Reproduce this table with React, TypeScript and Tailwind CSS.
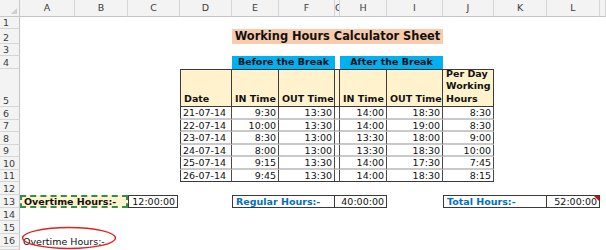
import React from 'react'

const colStart: Record<number, string> = {
  1: 'col-start-1', 2: 'col-start-2', 3: 'col-start-3', 4: 'col-start-4', 5: 'col-start-5',
  6: 'col-start-6', 7: 'col-start-7', 8: 'col-start-8', 9: 'col-start-9', 10: 'col-start-10',
  11: 'col-start-11', 12: 'col-start-12', 13: 'col-start-13', 14: 'col-start-14',
}

const rowStart: Record<number, string> = {
  1: 'row-start-1', 2: 'row-start-2', 3: 'row-start-3', 4: 'row-start-4', 5: 'row-start-5',
  6: 'row-start-6', 7: 'row-start-7', 8: 'row-start-8', 9: 'row-start-9', 10: 'row-start-10',
  11: 'row-start-11', 12: 'row-start-12', 13: 'row-start-13', 14: 'row-start-14', 15: 'row-start-15',
  16: 'row-start-16', 17: 'row-start-17', 18: 'row-start-18',
}

const letters = ['A', 'B', 'C', 'D', 'E', 'F', 'G', 'H', 'I', 'J', 'K', 'L', '']

// date, in, out, in, out, per day
const rows = [
  ['21-07-14', '9:30', '13:30', '14:00', '18:30', '8:30'],
  ['22-07-14', '10:00', '13:30', '14:00', '19:00', '8:30'],
  ['23-07-14', '8:30', '13:00', '13:30', '18:00', '9:00'],
  ['24-07-14', '8:00', '13:00', '13:30', '18:30', '10:00'],
  ['25-07-14', '9:15', '13:30', '14:00', '17:30', '7:45'],
  ['26-07-14', '9:45', '13:30', '14:00', '18:30', '8:15'],
]

const heads = ['Date', 'IN Time', 'OUT Time', '', 'IN Time', 'OUT Time']

export default function App() {
  return (
    <div className="relative w-[606px] h-[250px] overflow-hidden bg-white font-['DejaVu_Sans',sans-serif] text-[9.5px] text-[#111]">
      <div className="grid w-full h-full grid-cols-[20px_55px_53px_52px_52px_47px_56px_5px_47px_56px_51px_53px_53px_1fr] grid-rows-[17px_12px_15px_12px_13px_38px_13px_12px_13px_12px_13px_12px_13px_13px_13px_13px_13px_1fr]">
        {/* corner */}
        <div className="col-start-1 row-start-1 relative bg-[#f3f3f3] border-r border-b border-[#c8c8c8]">
          <div className="absolute right-[2px] bottom-[2px] w-0 h-0 border-l-[6px] border-t-[6px] border-l-transparent border-t-transparent border-b-0 border-r-[6px] border-r-transparent" />
          <div className="absolute right-[2px] bottom-[2px] w-0 h-0 border-b-[6px] border-b-[#cfcfcf] border-l-[6px] border-l-transparent" />
        </div>

        {/* column headers */}
        {letters.map((l, i) => (
          <div
            key={'c' + i}
            className={`${colStart[i + 2]} row-start-1 flex items-center overflow-hidden whitespace-nowrap bg-[#f3f3f3] border-r border-b border-r-[#d6d6d6] border-b-[#c4c4c4] text-[#3c3c3c] ${l === 'G' ? 'justify-start' : 'justify-center'}`}
          >
            {l}
          </div>
        ))}

        {/* row headers */}
        {Array.from({ length: 17 }).map((_, i) => (
          <div
            key={'r' + i}
            className={`col-start-1 ${rowStart[i + 2]} flex items-end pl-[3px] leading-[11px] bg-[#f3f3f3] border-r border-b border-r-[#c4c4c4] border-b-[#d6d6d6] text-[#3c3c3c]`}
          >
            {i < 16 ? i + 1 : ''}
          </div>
        ))}

        {/* title */}
        <div className="col-start-6 col-span-5 row-start-3 flex items-center justify-center bg-[#f8cbad] font-bold text-[11.4px] whitespace-nowrap">
          Working Hours Calculator Sheet
        </div>

        {/* break bands */}
        <div className="col-start-6 col-span-2 row-start-5 flex items-center justify-center bg-[#00b0f0] font-bold whitespace-nowrap">
          Before the Break
        </div>
        <div className="col-start-9 col-span-2 row-start-5 flex items-center justify-center bg-[#00b0f0] font-bold whitespace-nowrap">
          After the Break
        </div>

        {/* table header row 5 */}
        {heads.map((h, i) => (
          <div
            key={'h' + i}
            className={`${colStart[i + 5]} row-start-6 flex items-end pl-[3px] pb-[1px] leading-[12px] bg-[#fff2cc] font-bold whitespace-nowrap border-t border-b border-r border-[#3a3a3a] ${i === 0 ? 'border-l' : ''}`}
          >
            {h}
          </div>
        ))}
        <div className="col-start-11 row-start-6 flex items-end pl-[3px] pb-[1px] leading-[12.5px] bg-[#fff2cc] font-bold whitespace-nowrap border-t border-b border-r border-[#3a3a3a]">
          <span>Per Day<br />Working<br />Hours</span>
        </div>

        {/* data rows */}
        {rows.map((r, ri) => {
          const last = ri === rows.length - 1
          const bottom = last ? 'border-b border-b-[#3a3a3a]' : 'border-b-2 border-b-[#c9c9c9]'
          const cells = [r[0], r[1], r[2], '', r[3], r[4], r[5]]
          return cells.map((v, ci) => (
            <div
              key={'d' + ri + '-' + ci}
              className={`${colStart[ci + 5]} ${rowStart[ri + 7]} flex items-center leading-[11px] whitespace-nowrap border-r border-r-[#4a4a4a] ${bottom} ${ci === 0 ? 'border-l border-l-[#3a3a3a] justify-start pl-[2px]' : 'justify-end pr-[2px]'}`}
            >
              {v}
            </div>
          ))
        })}

        {/* row 13 */}
        <div className="col-start-2 col-span-2 row-start-14 flex items-center pl-[2px] bg-[#fff2cc] border-2 border-dashed border-[#2f8f4e] font-bold whitespace-nowrap leading-[10px]">
          Overtime Hours:-
        </div>
        <div className="col-start-4 row-start-14 w-[50px] flex items-center justify-end pr-[2px] border border-[#3a3a3a] whitespace-nowrap leading-[10px]">
          12:00:00
        </div>

        <div className="col-start-6 col-span-2 row-start-14 flex items-center pl-[3px] border border-[#3a3a3a] text-[#0070c0] font-bold whitespace-nowrap leading-[10px]">
          Regular Hours:-
        </div>
        <div className="col-start-8 col-span-2 row-start-14 flex items-center justify-end pr-[2px] border-y border-r border-[#3a3a3a] whitespace-nowrap leading-[10px]">
          40:00:00
        </div>

        <div className="col-start-11 col-span-2 row-start-14 flex items-center pl-[3px] border border-[#3a3a3a] text-[#0070c0] font-bold whitespace-nowrap leading-[10px]">
          Total Hours:-
        </div>
        <div className="col-start-13 row-start-14 relative flex items-center justify-end pr-[2px] border-y border-r border-[#3a3a3a] whitespace-nowrap leading-[10px]">
          52:00:00
          <div className="absolute top-0 right-0 w-0 h-0 border-t-[5px] border-t-[#e00000] border-l-[5px] border-l-transparent" />
        </div>

        {/* row 16 */}
        <div className="col-start-2 col-span-3 row-start-17 flex items-end pl-[3px] leading-[11px] whitespace-nowrap">
          Overtime Hours:-
        </div>
      </div>

      {/* red ring drawn over row 16 */}
      <svg className="absolute left-[21px] top-[226px]" width="96" height="24" viewBox="0 0 96 24">
        <ellipse cx="48" cy="12" rx="46.5" ry="10.5" fill="none" stroke="#e3201c" strokeWidth="1.4" />
      </svg>
    </div>
  )
}
